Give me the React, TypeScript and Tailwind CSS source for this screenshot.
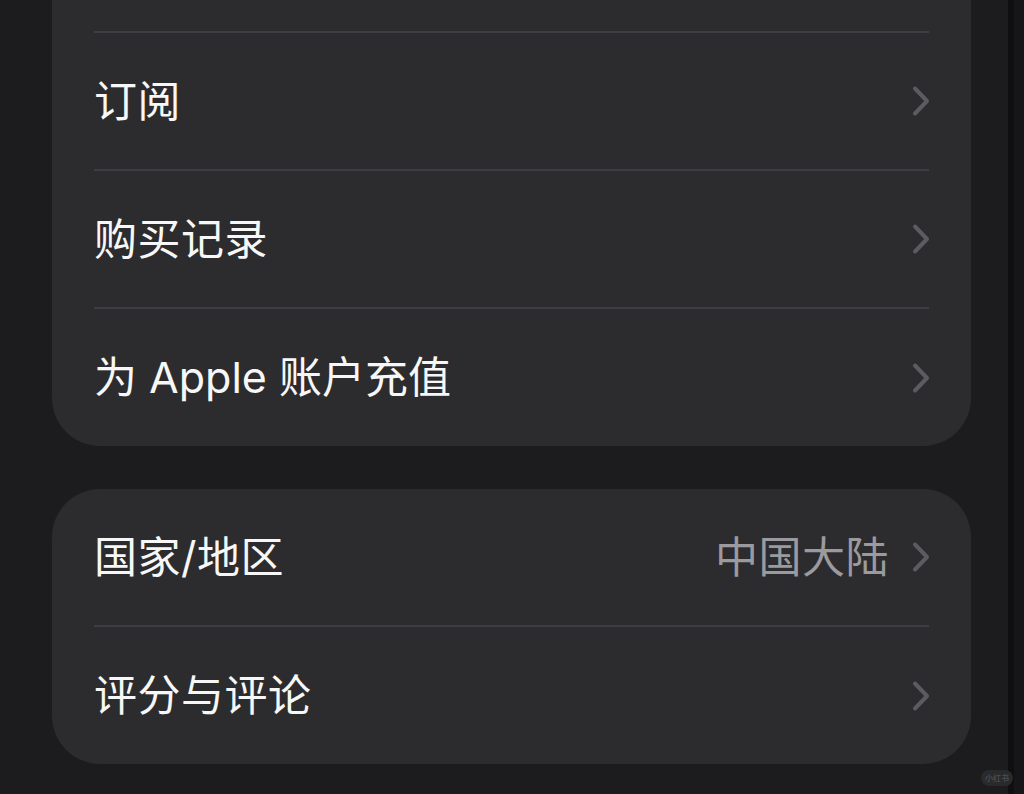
import React from 'react';

interface Row {
  label: string;
  value?: string;
  tight?: boolean;
}

const groupA: Row[] = [{ label: '订阅' }, { label: '购买记录' }, { label: '为 Apple 账户充值', tight: true }];
const groupB: Row[] = [{ label: '国家/地区', value: '中国大陆' }, { label: '评分与评论' }];

const font = { fontFamily: '"Inter", "Noto Sans CJK SC", sans-serif' };

function Chevron() {
  return (
    <svg width="20" height="32" viewBox="0 0 20 32" className="shrink-0">
      <path d="M4 3.5 L16 16 L4 28.5" fill="none" stroke="#5c5c60" strokeWidth="4" strokeLinecap="round" strokeLinejoin="round" />
    </svg>
  );
}

function SettingsRow({ row, divider, height }: { row: Row; divider: boolean; height: string }) {
  return (
    <div className={`mx-[42px] flex items-center justify-between ${height} ${divider ? 'border-t-2 border-[#3e3e42]' : ''}`}>
      <span className={`text-[43px] leading-none text-[#f7f7f7] ${row.tight ? 'tracking-[0px]' : 'tracking-[0.5px]'}`}>{row.label}</span>
      <div className="flex items-center gap-[22px] -mr-[2px]">
        {row.value && <span className="text-[43px] leading-none text-[#9a9a9f] tracking-[0.5px]">{row.value}</span>}
        <Chevron />
      </div>
    </div>
  );
}

export default function App() {
  return (
    <div className="relative flex w-[1024px] h-[794px] overflow-hidden bg-[#1c1c1e]" style={font}>
      <main className="flex-1 flex flex-col pl-[52px] pr-[37px]">
        {/* first group, top cut by the screen edge */}
        <section className="bg-[#2c2c2e] rounded-b-[48px]">
          <div className="h-[31px]" />
          <SettingsRow row={groupA[0]} divider height="h-[138px]" />
          <SettingsRow row={groupA[1]} divider height="h-[138px]" />
          <SettingsRow row={groupA[2]} divider height="h-[139px]" />
        </section>

        <section className="mt-[43px] bg-[#2c2c2e] rounded-[48px]">
          <SettingsRow row={groupB[0]} divider={false} height="h-[136px]" />
          <SettingsRow row={groupB[1]} divider height="h-[139px]" />
        </section>
      </main>

      <div className="w-[6px] bg-[#0f0f10]" />
      <div className="w-[10px] bg-[#161618]" />

      <div className="absolute left-[981px] top-[770px] px-[4px] h-[16px] rounded-full bg-[#2a2a2c] flex items-center">
        <span className="text-[8px] leading-none text-[#5a5a5e]">小红书</span>
      </div>
    </div>
  );
}
